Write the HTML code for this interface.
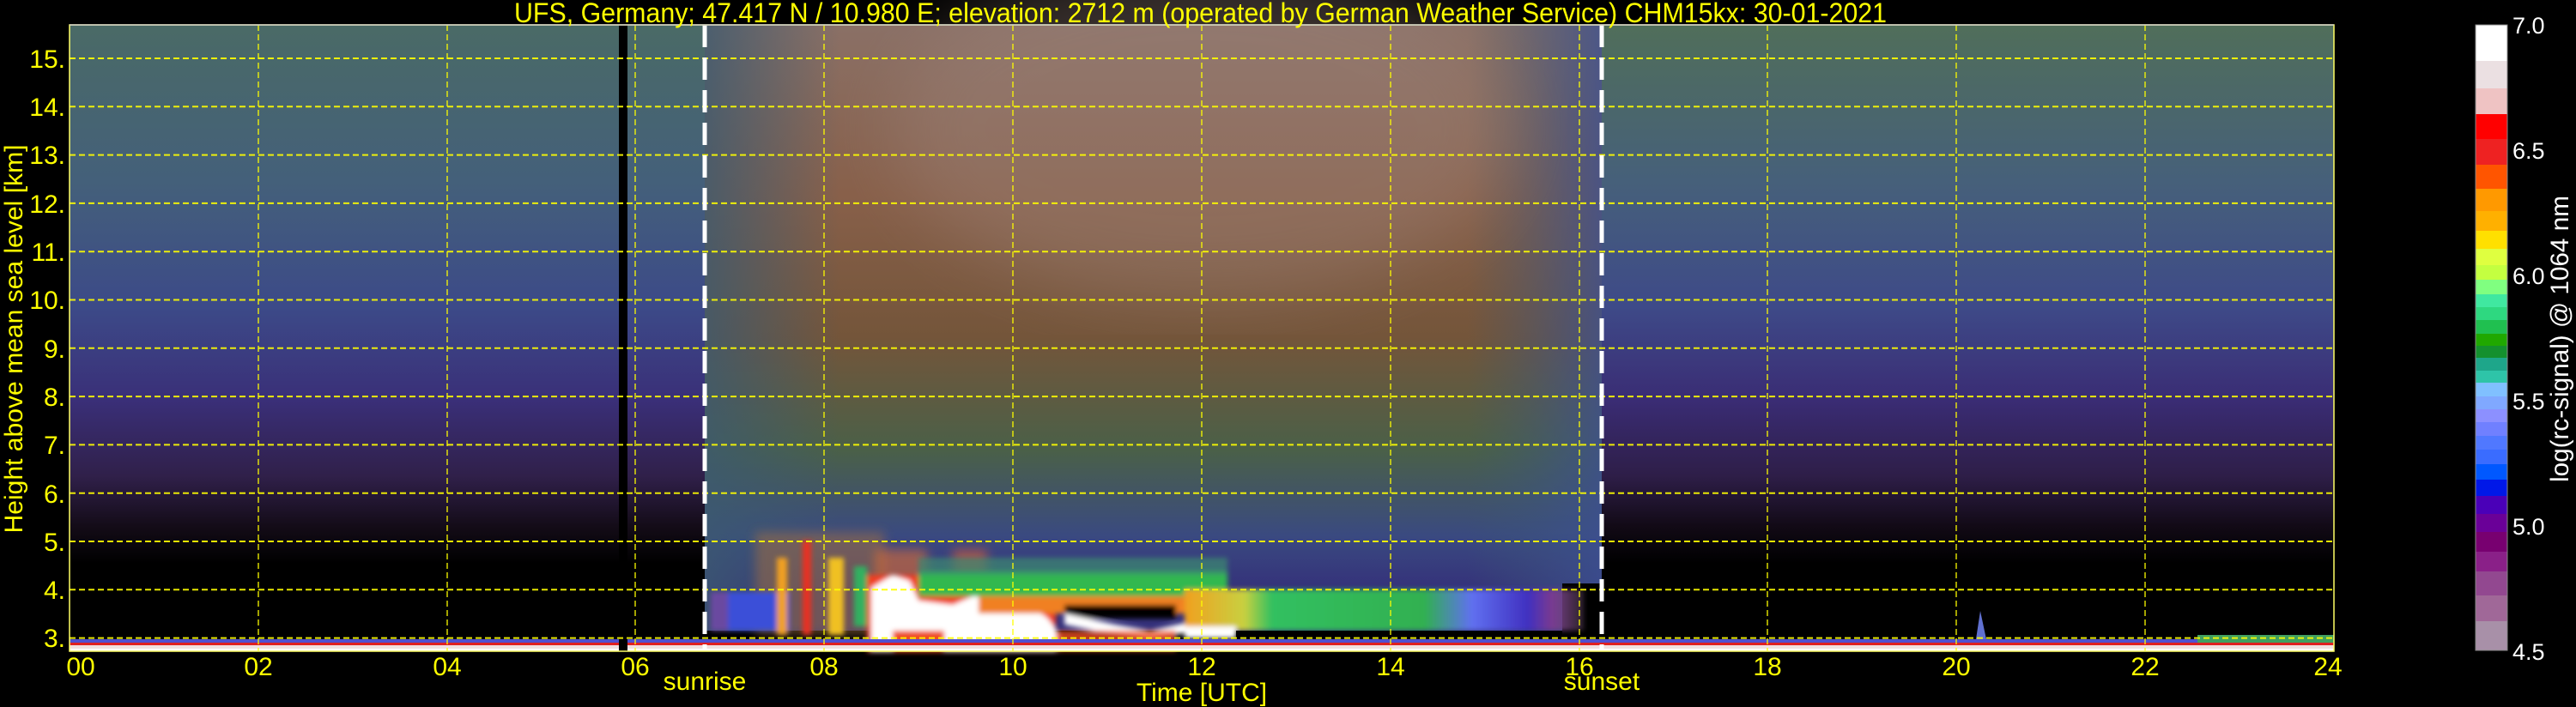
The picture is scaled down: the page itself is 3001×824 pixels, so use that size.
<!DOCTYPE html>
<html><head><meta charset="utf-8"><style>
html,body{margin:0;padding:0;background:#000;}
svg{display:block;}
text{font-family:"Liberation Sans","DejaVu Sans",sans-serif;}
</style></head><body>
<svg width="3001" height="824" viewBox="0 0 3001 824" xmlns="http://www.w3.org/2000/svg">
<defs>
<linearGradient id="gl" x1="0" y1="29" x2="0" y2="759" gradientUnits="userSpaceOnUse">
<stop offset="0" stop-color="#4a6a66"/>
<stop offset="0.25" stop-color="#44607a"/>
<stop offset="0.45" stop-color="#3c4a88"/>
<stop offset="0.6" stop-color="#3a2f78"/>
<stop offset="0.72" stop-color="#30204a"/>
<stop offset="0.8" stop-color="#140c18"/>
<stop offset="0.86" stop-color="#000"/>
<stop offset="1" stop-color="#000"/>
</linearGradient>
<linearGradient id="gr" x1="0" y1="29" x2="0" y2="759" gradientUnits="userSpaceOnUse">
<stop offset="0" stop-color="#506e5a"/>
<stop offset="0.25" stop-color="#46607a"/>
<stop offset="0.45" stop-color="#3e4a88"/>
<stop offset="0.6" stop-color="#3a2c74"/>
<stop offset="0.72" stop-color="#2e1e48"/>
<stop offset="0.8" stop-color="#120a16"/>
<stop offset="0.86" stop-color="#000"/>
<stop offset="1" stop-color="#000"/>
</linearGradient>
<linearGradient id="gm" x1="0" y1="29" x2="0" y2="690" gradientUnits="userSpaceOnUse">
<stop offset="0" stop-color="#8a7066"/>
<stop offset="0.3" stop-color="#88604a"/>
<stop offset="0.55" stop-color="#74553a"/>
<stop offset="0.75" stop-color="#4a6048"/>
<stop offset="0.9" stop-color="#3a4a80"/>
<stop offset="1" stop-color="#34307a"/>
</linearGradient>
<linearGradient id="gmh" x1="821" y1="0" x2="1866" y2="0" gradientUnits="userSpaceOnUse">
<stop offset="0" stop-color="#3c5a70" stop-opacity="0.8"/>
<stop offset="0.15" stop-color="#3c5a70" stop-opacity="0"/>
<stop offset="0.85" stop-color="#3c5a70" stop-opacity="0"/>
<stop offset="1" stop-color="#3c5090" stop-opacity="0.8"/>
</linearGradient>
<linearGradient id="lay" x1="1380" y1="0" x2="1845" y2="0" gradientUnits="userSpaceOnUse">
<stop offset="0" stop-color="#f0a020"/>
<stop offset="0.15" stop-color="#c8d040"/>
<stop offset="0.22" stop-color="#30c060"/>
<stop offset="0.6" stop-color="#30b050"/>
<stop offset="0.72" stop-color="#6070f0"/>
<stop offset="0.86" stop-color="#4030c0"/>
<stop offset="0.92" stop-color="#7a3a90"/>
<stop offset="1" stop-color="#705070" stop-opacity="0.4"/>
</linearGradient>
<filter id="b2"><feGaussianBlur stdDeviation="3"/></filter>
<filter id="b5"><feGaussianBlur stdDeviation="6"/></filter>
<filter id="b6"><feGaussianBlur stdDeviation="40"/></filter>
</defs>

<rect x="81" y="29" width="740" height="730" fill="url(#gl)"/>
<rect x="1866" y="29" width="853" height="730" fill="url(#gr)"/>
<rect x="821" y="29" width="1045" height="730" fill="url(#gm)"/>
<rect x="821" y="29" width="1045" height="730" fill="url(#gmh)"/>
<ellipse cx="1400" cy="150" rx="360" ry="200" fill="#a08880" opacity="0.35" filter="url(#b6)"/>
<rect x="821" y="735" width="1045" height="12" fill="#000"/>
<rect x="1820" y="680" width="46" height="67" fill="#000"/>
<!-- aerosol layer -->
<g filter="url(#b5)">
<rect x="880" y="620" width="150" height="120" fill="#a07040" opacity="0.55"/>
<rect x="1020" y="640" width="60" height="40" fill="#e07030" opacity="0.6"/>
<rect x="1110" y="640" width="40" height="40" fill="#e06030" opacity="0.6"/>
</g>
<g filter="url(#b2)">
<rect x="830" y="690" width="90" height="45" fill="#3a50d8"/>
<rect x="828" y="690" width="20" height="45" fill="#6a4aa0"/>
<rect x="905" y="650" width="12" height="90" fill="#f0a020"/>
<rect x="935" y="630" width="10" height="110" fill="#e83020"/>
<rect x="965" y="650" width="18" height="90" fill="#f0c020"/>
<rect x="995" y="660" width="15" height="70" fill="#30b060"/>
<rect x="1010" y="670" width="220" height="90" fill="#f04020"/>
<path d="M1015 685 L1040 670 L1060 677 L1070 700 L1110 705 L1140 692 L1160 702 L1200 707 L1220 720 L1235 740 L1235 759 L1015 759 Z" fill="#ffffff"/>
<rect x="1040" y="735" width="60" height="24" fill="#f05020"/>
<rect x="1070" y="665" width="360" height="30" fill="#30b850"/>
<rect x="1070" y="650" width="360" height="20" fill="#3a8a70" opacity="0.7"/>
<rect x="1140" y="695" width="240" height="20" fill="#f08020"/>
<rect x="1240" y="705" width="130" height="16" fill="#000"/>
<path d="M1240 715 L1300 728 L1340 735 L1380 726 L1395 720 L1395 735 L1340 745 L1290 738 L1240 728 Z" fill="#fff"/>
<rect x="1230" y="735" width="140" height="24" fill="#f05020" opacity="0.8"/>
<rect x="1380" y="687" width="465" height="48" fill="url(#lay)"/>
<rect x="1380" y="730" width="60" height="14" fill="#fff"/>
</g>
<rect x="1440" y="735" width="380" height="10" fill="#000"/>
<!-- ground strip -->
<rect x="81" y="745" width="2638" height="4" fill="#5050d0"/>
<rect x="81" y="749" width="2638" height="4" fill="#e02020"/>
<rect x="81" y="752" width="2638" height="5" fill="#f0e0e0"/>
<rect x="81" y="756" width="2638" height="3" fill="#ffffff"/>
<rect x="2560" y="740" width="159" height="9" fill="#40a060"/>
<path d="M2302 745 L2307 712 L2314 745 Z" fill="#6070d0"/>
<rect x="721" y="29" width="10" height="730" fill="#000"/>

<!-- grid -->
<g stroke="#ffff00" stroke-width="2" stroke-dasharray="7,4" opacity="0.9">
<line x1="81" x2="2719" y1="68" y2="68"/>
<line x1="81" x2="2719" y1="124.3" y2="124.3"/>
<line x1="81" x2="2719" y1="180.6" y2="180.6"/>
<line x1="81" x2="2719" y1="236.9" y2="236.9"/>
<line x1="81" x2="2719" y1="293.2" y2="293.2"/>
<line x1="81" x2="2719" y1="349.5" y2="349.5"/>
<line x1="81" x2="2719" y1="405.8" y2="405.8"/>
<line x1="81" x2="2719" y1="462.1" y2="462.1"/>
<line x1="81" x2="2719" y1="518.4" y2="518.4"/>
<line x1="81" x2="2719" y1="574.7" y2="574.7"/>
<line x1="81" x2="2719" y1="631" y2="631"/>
<line x1="81" x2="2719" y1="687.3" y2="687.3"/>
<line x1="81" x2="2719" y1="743.6" y2="743.6"/>
</g>
<g stroke="#ffff00" stroke-width="1.5" stroke-dasharray="7,4" opacity="0.85">
<line x1="301" x2="301" y1="29" y2="759"/>
<line x1="521" x2="521" y1="29" y2="759"/>
<line x1="740" x2="740" y1="29" y2="759"/>
<line x1="960" x2="960" y1="29" y2="759"/>
<line x1="1180" x2="1180" y1="29" y2="759"/>
<line x1="1400" x2="1400" y1="29" y2="759"/>
<line x1="1620" x2="1620" y1="29" y2="759"/>
<line x1="1840" x2="1840" y1="29" y2="759"/>
<line x1="2059" x2="2059" y1="29" y2="759"/>
<line x1="2279" x2="2279" y1="29" y2="759"/>
<line x1="2499" x2="2499" y1="29" y2="759"/>
</g>
<g stroke="#ffffff" stroke-width="5" stroke-dasharray="26,12">
<line x1="821" x2="821" y1="29" y2="759"/>
<line x1="1866" x2="1866" y1="29" y2="759"/>
</g>
<rect x="81" y="29" width="2638" height="730" fill="none" stroke="#ffff66" stroke-width="1.5"/>
<line x1="81" x2="2719" y1="29" y2="29" stroke="#cccccc" stroke-width="1.5"/>

<text x="599" y="26" font-size="32" fill="#ffff00" textLength="1599" lengthAdjust="spacingAndGlyphs">UFS, Germany; 47.417 N / 10.980 E; elevation: 2712 m  (operated by German Weather Service)    CHM15kx: 30-01-2021</text>

<g font-size="30" fill="#ffff00" text-anchor="end">
<text x="76" y="79">15.</text>
<text x="76" y="135">14.</text>
<text x="76" y="191">13.</text>
<text x="76" y="248">12.</text>
<text x="76" y="304">11.</text>
<text x="76" y="360">10.</text>
<text x="76" y="417">9.</text>
<text x="76" y="473">8.</text>
<text x="76" y="529">7.</text>
<text x="76" y="586">6.</text>
<text x="76" y="642">5.</text>
<text x="76" y="698">4.</text>
<text x="76" y="754">3.</text>
</g>
<text transform="translate(26,395) rotate(-90)" font-size="30" fill="#ffff00" text-anchor="middle" textLength="453" lengthAdjust="spacingAndGlyphs">Height above mean sea level [km]</text>

<g font-size="30" fill="#ffff00" text-anchor="middle">
<text x="94" y="787">00</text>
<text x="301" y="787">02</text>
<text x="521" y="787">04</text>
<text x="740" y="787">06</text>
<text x="960" y="787">08</text>
<text x="1180" y="787">10</text>
<text x="1400" y="787">12</text>
<text x="1620" y="787">14</text>
<text x="1840" y="787">16</text>
<text x="2059" y="787">18</text>
<text x="2279" y="787">20</text>
<text x="2499" y="787">22</text>
<text x="2712" y="787">24</text>
</g>
<text x="821" y="804" font-size="30" fill="#ffff00" text-anchor="middle">sunrise</text>
<text x="1866" y="804" font-size="30" fill="#ffff00" text-anchor="middle">sunset</text>
<text x="1400" y="817" font-size="30" fill="#ffff00" text-anchor="middle">Time [UTC]</text>

<g>
<rect x="2884" y="29" width="37" height="42" fill="#ffffff"/>
<rect x="2884" y="71" width="37" height="33" fill="#ebe0e2"/>
<rect x="2884" y="103" width="37" height="30" fill="#efc3c3"/>
<rect x="2884" y="133" width="37" height="29" fill="#ff0000"/>
<rect x="2884" y="162" width="37" height="30" fill="#ee2222"/>
<rect x="2884" y="192" width="37" height="29" fill="#ff5500"/>
<rect x="2884" y="220" width="37" height="26" fill="#ff9900"/>
<rect x="2884" y="246" width="37" height="23" fill="#ffb000"/>
<rect x="2884" y="269" width="37" height="21" fill="#ffe000"/>
<rect x="2884" y="290" width="37" height="19" fill="#dfff40"/>
<rect x="2884" y="309" width="37" height="17" fill="#c4ff40"/>
<rect x="2884" y="326" width="37" height="17" fill="#80ff80"/>
<rect x="2884" y="343" width="37" height="16" fill="#40e8a0"/>
<rect x="2884" y="358" width="37" height="15" fill="#2ed880"/>
<rect x="2884" y="373" width="37" height="16" fill="#20c050"/>
<rect x="2884" y="389" width="37" height="14" fill="#20a800"/>
<rect x="2884" y="403" width="37" height="14" fill="#14902e"/>
<rect x="2884" y="417" width="37" height="15" fill="#1ea68a"/>
<rect x="2884" y="432" width="37" height="14" fill="#2ec4a8"/>
<rect x="2884" y="446" width="37" height="16" fill="#80c0ff"/>
<rect x="2884" y="462" width="37" height="15" fill="#80a8ff"/>
<rect x="2884" y="477" width="37" height="16" fill="#8c90ff"/>
<rect x="2884" y="492" width="37" height="16" fill="#7080ff"/>
<rect x="2884" y="508" width="37" height="17" fill="#5078ff"/>
<rect x="2884" y="524" width="37" height="18" fill="#3a6cff"/>
<rect x="2884" y="541" width="37" height="19" fill="#0058ff"/>
<rect x="2884" y="559" width="37" height="20" fill="#0018e8"/>
<rect x="2884" y="578" width="37" height="21" fill="#4a00b8"/>
<rect x="2884" y="599" width="37" height="21" fill="#6a0098"/>
<rect x="2884" y="620" width="37" height="23" fill="#780070"/>
<rect x="2884" y="643" width="37" height="24" fill="#8a2088"/>
<rect x="2884" y="666" width="37" height="28" fill="#924890"/>
<rect x="2884" y="694" width="37" height="30" fill="#a06898"/>
<rect x="2884" y="724" width="37" height="34" fill="#a890a8"/>
<rect x="2884" y="29" width="37" height="729" fill="none" stroke="#888" stroke-width="1"/>
</g>
<g font-size="27" fill="#ffffff">
<text x="2927" y="39">7.0</text>
<text x="2927" y="185">6.5</text>
<text x="2927" y="331">6.0</text>
<text x="2927" y="477">5.5</text>
<text x="2927" y="623">5.0</text>
<text x="2927" y="769">4.5</text>
</g>
<text transform="translate(2992,395) rotate(-90)" font-size="30" fill="#ffffff" text-anchor="middle" textLength="334" lengthAdjust="spacingAndGlyphs">log(rc-signal) @ 1064 nm</text>
</svg>
</body></html>
